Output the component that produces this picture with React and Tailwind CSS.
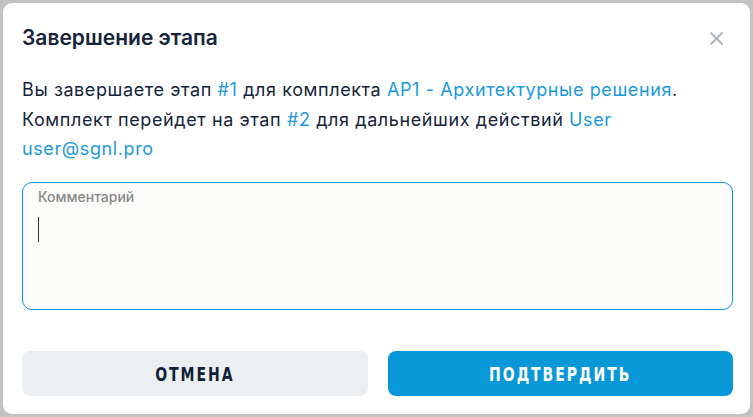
import React from 'react';

const FONT = { fontFamily: 'Inter, "Noto Sans", sans-serif' };
const BTN_FONT = { fontFamily: '"DejaVu Sans Condensed", "Liberation Sans", sans-serif' };

function CloseIcon() {
    return (
        <svg width="15" height="15" viewBox="0 0 15 15" fill="none">
            <path d="M1.5 1.5L13.5 13.5M13.5 1.5L1.5 13.5" stroke="#abb5be" strokeWidth="2" />
        </svg>
    );
}

export default function App() {
    return (
        <div className="w-full h-screen bg-[#c2c2c2] p-[3px]" style={FONT}>
            <div className="h-full w-full bg-white rounded-[9px] pl-[19px] pr-[17px] pt-[21px] pb-[18px] flex flex-col">
                {/* header */}
                <div className="flex items-center justify-between h-[28px]">
                    <h1 className="text-[21px] leading-[28px] font-semibold text-[#15243a]">Завершение этапа</h1>
                    <button className="mr-[9px] flex items-center justify-center">
                        <CloseIcon />
                    </button>
                </div>

                {/* message */}
                <p className="mt-[23px] text-[18px] leading-[29.5px] tracking-[0.6px] text-[#15243a]">
                    Вы завершаете этап <span className="text-[#1a9ad9]">#1</span> для комплекта{' '}
                    <span className="text-[#1a9ad9]">AP1 - Архитектурные решения</span>.
                    <br />
                    Комплект перейдет на этап <span className="text-[#1a9ad9]">#2</span> для дальнейших действий{' '}
                    <span className="text-[#1a9ad9]">User</span> <span className="text-[#1a9ad9]">user@sgnl.pro</span>
                </p>

                {/* comment box */}
                <div className="mt-[18px] h-[128px] border border-[#0a98d8] rounded-[10px] bg-[#fbfbf9] px-[15px] pt-[5px]">
                    <div className="text-[14px] leading-[18px] text-[#888888] font-medium">Комментарий</div>
                    <div className="mt-[11px] w-[1px] h-[25px] bg-[#333]" />
                </div>

                {/* buttons */}
                <div className="mt-auto grid grid-cols-2 gap-[20px]">
                    <button className="h-[45px] rounded-[8px] bg-[#eceff2] text-[#0f2135] flex items-center justify-center">
                        <span className="inline-block text-[20px] leading-none font-bold tracking-[2.5px] scale-x-[0.78]" style={BTN_FONT}>
                            ОТМЕНА
                        </span>
                    </button>
                    <button className="h-[45px] rounded-[8px] bg-[#0897d7] text-white flex items-center justify-center">
                        <span className="inline-block text-[20px] leading-none font-bold tracking-[2.5px] scale-x-[0.78]" style={BTN_FONT}>
                            ПОДТВЕРДИТЬ
                        </span>
                    </button>
                </div>
            </div>
        </div>
    );
}
